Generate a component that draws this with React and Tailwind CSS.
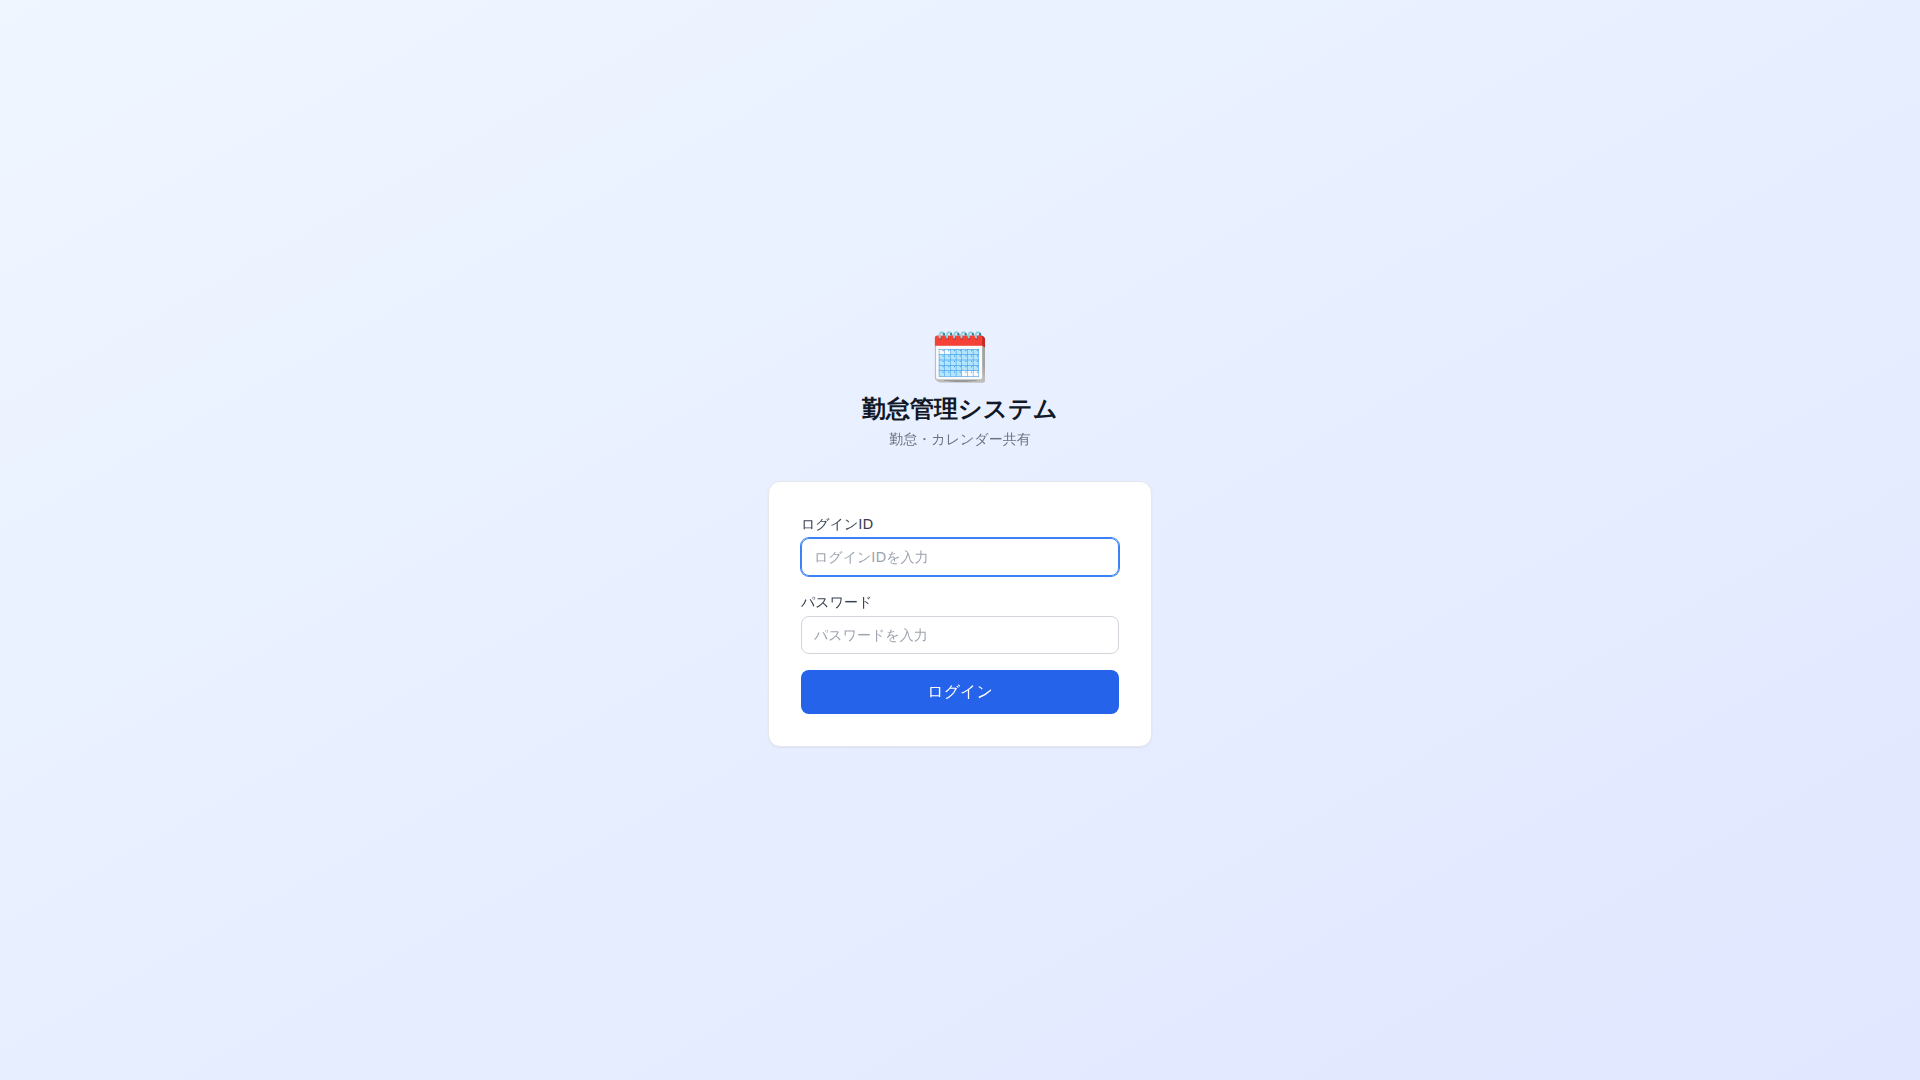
import { useState } from "react";

const inputClass =
  "w-full border border-[#d1d5db] rounded-lg px-3 py-2 text-sm placeholder:text-[#9ca3af] focus:outline-none focus:ring-1 focus:ring-[#3b82f6] focus:border-[#3b82f6]";

export default function App() {
  const [loginId, setLoginId] = useState("");
  const [password, setPassword] = useState("");

  return (
    <div
      lang="ja"
      className="min-h-screen flex items-center justify-center p-4 bg-linear-to-br/srgb from-[#eff6ff] to-[#e0e7ff] font-['DejaVu_Sans','WenQuanYi_Zen_Hei','Noto_Sans_CJK_JP',sans-serif]"
    >
      <div className="w-full max-w-sm">
        {/* ヘッダー */}
        <div className="text-center mb-8">
          <div className="text-5xl mb-3 font-['Inter',sans-serif]">🗓️</div>
          <h1 className="text-2xl font-bold text-[#111827] font-['DejaVu_Sans',sans-serif]">勤怠管理システム</h1>
          <p className="text-sm text-[#6b7280] mt-1">勤怠・カレンダー共有</p>
        </div>

        {/* ログインフォーム */}
        <form
          className="bg-white rounded-xl border border-[#e5e7eb] shadow-xs p-8 space-y-4"
          onSubmit={e => e.preventDefault()}
        >
          <div>
            <label htmlFor="loginId" className="block text-sm font-medium text-[#374151] mb-1">
              ログインID
            </label>
            <input
              id="loginId"
              type="text"
              autoFocus
              value={loginId}
              onChange={e => setLoginId(e.target.value)}
              placeholder="ログインIDを入力"
              className={inputClass}
            />
          </div>
          <div>
            <label htmlFor="password" className="block text-sm font-medium text-[#374151] mb-1">
              パスワード
            </label>
            <input
              id="password"
              type="password"
              value={password}
              onChange={e => setPassword(e.target.value)}
              placeholder="パスワードを入力"
              className={inputClass}
            />
          </div>
          <button
            type="submit"
            className="w-full bg-[#2563eb] hover:bg-[#1d4ed8] text-white font-medium rounded-lg py-2.5"
          >
            ログイン
          </button>
        </form>
      </div>
    </div>
  );
}
